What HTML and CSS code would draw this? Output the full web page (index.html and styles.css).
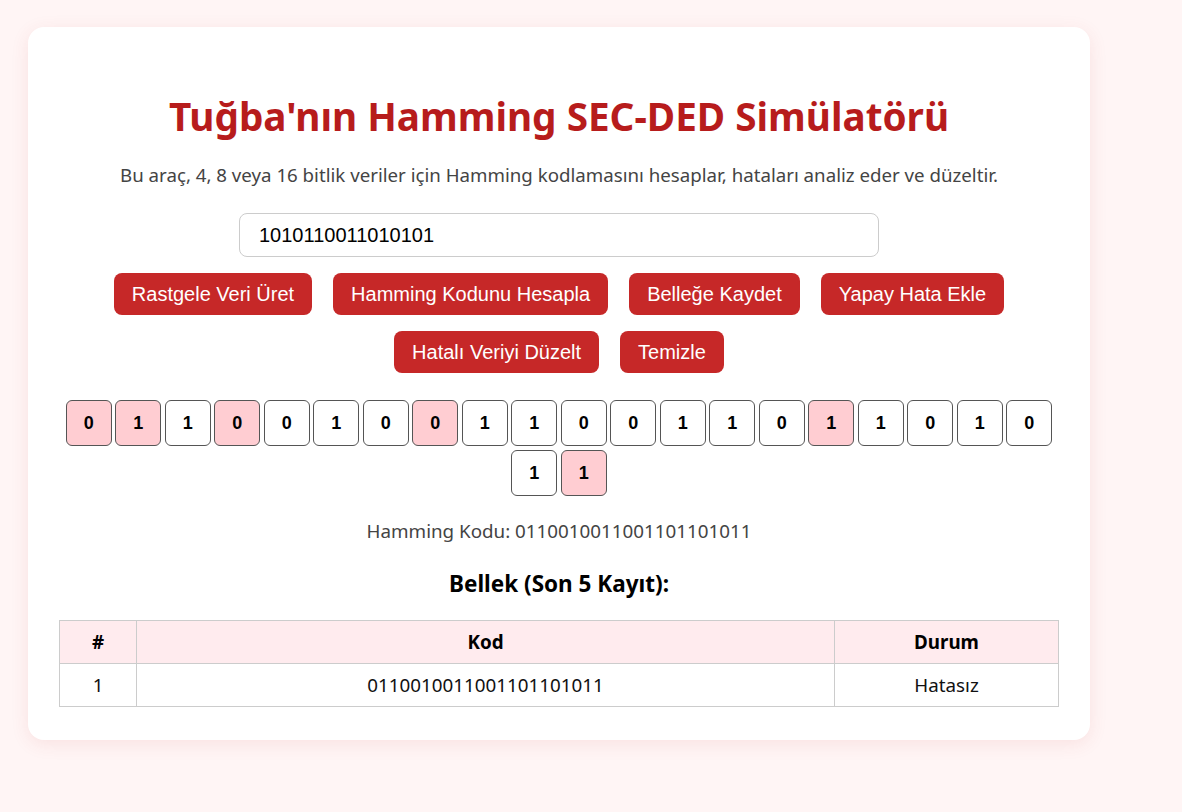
FILE: index.html
```html
<!DOCTYPE html>
<html lang="tr">
<head>
<meta charset="utf-8">
<title>Hamming SEC-DED Simülatörü</title>
<link rel="stylesheet" href="styles.css">
</head>
<body>
<div class="card">
  <h1 class="title">Tuğba'nın Hamming SEC-DED Simülatörü</h1>
  <p class="subtitle">Bu araç, 4, 8 veya 16 bitlik veriler için Hamming kodlamasını hesaplar, hataları analiz eder ve düzeltir.</p>
  <div class="input-row">
    <input class="data-input" type="text" value="1010110011010101">
  </div>
  <div class="buttons">
    <button class="btn">Rastgele Veri Üret</button>
    <button class="btn">Hamming Kodunu Hesapla</button>
    <button class="btn">Belleğe Kaydet</button>
    <button class="btn">Yapay Hata Ekle</button>
    <button class="btn">Hatalı Veriyi Düzelt</button>
    <button class="btn">Temizle</button>
  </div>
  <div class="bits">
    <div class="bit parity">0</div>
    <div class="bit parity">1</div>
    <div class="bit">1</div>
    <div class="bit parity">0</div>
    <div class="bit">0</div>
    <div class="bit">1</div>
    <div class="bit">0</div>
    <div class="bit parity">0</div>
    <div class="bit">1</div>
    <div class="bit">1</div>
    <div class="bit">0</div>
    <div class="bit">0</div>
    <div class="bit">1</div>
    <div class="bit">1</div>
    <div class="bit">0</div>
    <div class="bit parity">1</div>
    <div class="bit">1</div>
    <div class="bit">0</div>
    <div class="bit">1</div>
    <div class="bit">0</div>
    <div class="bit">1</div>
    <div class="bit parity">1</div>
  </div>
  <p class="code-line">Hamming Kodu: 0110010011001101101011</p>
  <h3 class="mem-title">Bellek (Son 5 Kayıt):</h3>
  <table class="mem-table">
    <thead>
      <tr><th class="col-no">#</th><th>Kod</th><th class="col-state">Durum</th></tr>
    </thead>
    <tbody>
      <tr><td>1</td><td>0110010011001101101011</td><td>Hatasız</td></tr>
    </tbody>
  </table>
</div>
</body>
</html>
```

FILE: styles.css
```css
html, body {
  margin: 0;
  padding: 0;
}
body {
  background: #fff5f5;
  font-family: "Noto Sans", "Open Sans", sans-serif;
  color: #222;
  padding: 27px 28px;
  min-height: 812px;
  box-sizing: border-box;
}
.card {
  width: 1000px;
  background: #fff;
  border-radius: 16px;
  padding: 31px 31px 33px;
  box-shadow: 0 4px 18px rgba(200, 60, 60, 0.10);
  text-align: center;
}
.title {
  margin: 34px 0 0;
  font-size: 38.7px;
  line-height: 48px;
  font-weight: 700;
  color: #b71c1c;
}
.subtitle {
  margin: 23px 0 0;
  font-size: 18.7px;
  line-height: 24px;
  color: #444;
}
.input-row {
  margin-top: 26px;
  display: flex;
  justify-content: center;
}
.data-input {
  width: 640px;
  height: 44px;
  box-sizing: border-box;
  border: 1px solid #ccc;
  border-radius: 8px;
  padding: 0 19px;
  font-family: "Liberation Sans", Arial, sans-serif;
  font-size: 20px;
  color: #000;
  outline: none;
}
.buttons {
  margin-top: 16px;
  display: flex;
  flex-wrap: wrap;
  justify-content: center;
  column-gap: 21px;
  row-gap: 16px;
  padding: 0 50px;
}
.btn {
  background: #c62828;
  color: #fff;
  border: none;
  border-radius: 8px;
  height: 42px;
  padding: 0 18px;
  font-family: "Liberation Sans", Arial, sans-serif;
  font-size: 20px;
}
.bits {
  margin-top: 27px;
  display: flex;
  flex-wrap: wrap;
  justify-content: center;
  column-gap: 3.5px;
  row-gap: 4px;
}
.bit {
  width: 46px;
  height: 46px;
  box-sizing: border-box;
  border: 1px solid #555;
  border-radius: 6px;
  background: #fff;
  display: flex;
  align-items: center;
  justify-content: center;
  font-family: "Liberation Sans", Arial, sans-serif;
  font-weight: 700;
  font-size: 18px;
  color: #000;
}
.bit.parity {
  background: #ffcdd2;
}
.code-line {
  margin: 22px 0 0;
  font-size: 18.8px;
  line-height: 26px;
  color: #444;
}
.mem-title {
  margin: 26px 0 0;
  font-size: 22.5px;
  line-height: 28px;
  font-weight: 700;
  color: #000;
}
.mem-table {
  margin-top: 22px;
  width: 100%;
  border-collapse: collapse;
  font-size: 18.8px;
}
.mem-table th, .mem-table td {
  border: 1px solid #ccc;
  height: 43px;
  padding: 0 10px;
  box-sizing: border-box;
  text-align: center;
}
.mem-table th {
  background: #ffebee;
  color: #000;
  font-weight: 700;
}
.mem-table td {
  color: #111;
}
.col-no {
  width: 77px;
}
.col-state {
  width: 224px;
}
```
